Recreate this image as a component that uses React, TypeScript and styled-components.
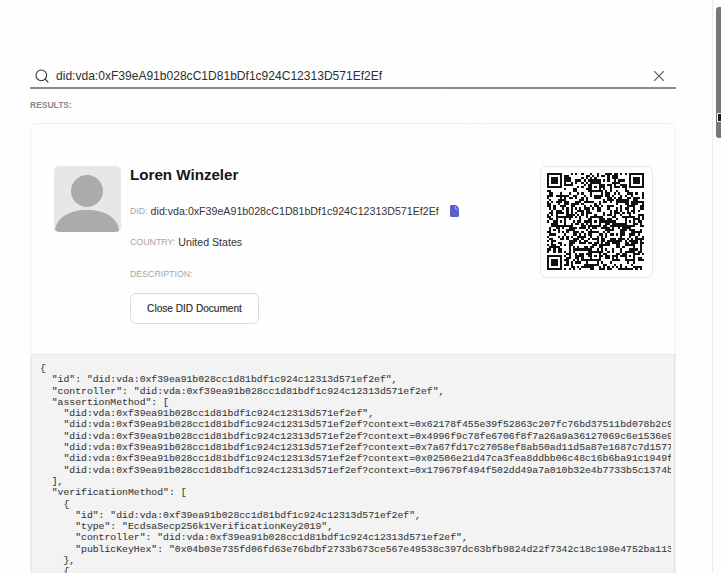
import styled, { createGlobalStyle } from "styled-components";
import { Search, X } from "lucide-react";

const DID_FULL = "did:vda:0xF39eA91b028cC1D81bDf1c924C12313D571Ef2Ef";
const DID = DID_FULL.toLowerCase();

const didDocument = `{
  "id": "${DID}",
  "controller": "${DID}",
  "assertionMethod": [
    "${DID}",
    "${DID}?context=0x62178f455e39f52863c207fc76bd37511bd078b2c9a1",
    "${DID}?context=0x4996f9c78fe6706f8f7a26a9a36127069c6e1536e9a1",
    "${DID}?context=0x7a67fd17c27058ef8ab50ad11d5a87e1687c7d1577a1",
    "${DID}?context=0x02506e21d47ca3fea8ddbb06c48c16b6ba91c1949fa1",
    "${DID}?context=0x179679f494f502dd49a7a010b32e4b7733b5c1374ba1"
  ],
  "verificationMethod": [
    {
      "id": "${DID}",
      "type": "EcdsaSecp256k1VerificationKey2019",
      "controller": "${DID}",
      "publicKeyHex": "0x04b03e735fd06fd63e76bdbf2733b673ce567e49538c397dc63bfb9824d22f7342c18c198e4752ba1139"
    },
    {`;

const GlobalStyle = createGlobalStyle`
  html, body {
    margin: 0;
    padding: 0;
    background: #fefefe;
    overflow: hidden;
  }
  * {
    box-sizing: border-box;
  }
`;

const Page = styled.div`
  position: relative;
  width: 721px;
  height: 573px;
  display: flex;
  overflow: hidden;
  background: #fefefe;
  font-family: "Liberation Sans", Arial, sans-serif;
`;

const Backdrop = styled.svg`
  position: absolute;
  inset: 0;
  width: 721px;
  height: 573px;
`;

const Main = styled.main`
  position: relative;
  flex: 1;
  display: flex;
  flex-direction: column;
  padding: 62px 36px 0 30px;
  min-width: 0;
`;

const SearchBar = styled.div`
  height: 27px;
  flex: none;
  display: flex;
  align-items: center;
  padding: 2px 8px 0 4px;
  border-bottom: 2px solid #8a8a8a;
`;

const SearchText = styled.span`
  flex: 1;
  margin-left: 6px;
  font-size: 12.05px;
  color: #2e2e2e;
`;

const ResultsLabel = styled.div`
  margin-top: 11px;
  font-size: 8.5px;
  line-height: 11px;
  font-weight: 700;
  color: #8b8b8b;
`;

const Card = styled.section`
  margin-top: 12px;
  flex: none;
  border: 1px solid #f1f1f1;
  border-radius: 6px;
`;

const Summary = styled.div`
  height: 230px;
  display: flex;
  padding: 42px 22px 0 23px;
`;

const Avatar = styled.svg`
  flex: none;
  width: 67px;
  height: 66px;
  border-radius: 5px;
  background: #e6e7e8;
`;

const Details = styled.div`
  flex: 1;
  margin-left: 9px;
  min-width: 0;
`;

const Name = styled.h2`
  margin: 0;
  font-size: 15.15px;
  line-height: 18px;
  font-weight: 700;
  color: #16161a;
`;

const Field = styled.div`
  display: flex;
  align-items: center;
  height: 14px;
  margin-top: 17.25px;
  &:first-of-type {
    margin-top: 20px;
  }
`;

const FieldLabel = styled.span`
  font-size: 8.8px;
  color: #a6a6a6;
  margin-right: 3px;
`;

const FieldValue = styled.span`
  font-size: 10.65px;
  color: #333333;
`;

const CopyIcon = styled.svg`
  width: 9px;
  height: 12px;
  margin-left: 11px;
`;

const CloseButton = styled.button`
  display: block;
  width: 129px;
  height: 31px;
  margin-top: 12.5px;
  padding: 0;
  background: #ffffff;
  border: 1px solid #dcdcdc;
  border-radius: 6px;
  font-family: inherit;
  font-size: 10.1px;
  color: #2c2c2c;
  -webkit-text-stroke: 0.15px #2c2c2c;
`;

const QrFrame = styled.div`
  flex: none;
  width: 113px;
  height: 112px;
  padding: 6px 7px 7px 6px;
  background: #ffffff;
  border: 1px solid #e9e9e9;
  border-radius: 6px;
`;

const QrImage = styled.svg`
  display: block;
  width: 97px;
  height: 97px;
  filter: blur(0.4px);
`;

const CodeBlock = styled.div`
  height: 240px;
  padding: 8px 3px 0 8px;
  background: #f3f3f3;
  border-top: 1px solid #e8e8e8;
  border-right: 1px solid #e2e2e2;
  border-left: 1px solid #e8e8e8;
`;

const Code = styled.pre`
  margin: 0;
  overflow: hidden;
  font-family: "Liberation Mono", "Courier New", monospace;
  font-size: 9.77px;
  line-height: 11.3px;
  color: #3a3a3a;
  -webkit-text-stroke: 0.1px #3a3a3a;
`;

const ScrollTrack = styled.div`
  position: relative;
  flex: none;
  width: 9px;
  padding: 7px 0 0 3px;
  background: #fdfdfd;
  border-left: 1px solid #ececec;
`;

const ScrollThumb = styled.div`
  width: 6px;
  height: 131px;
  border-radius: 3px 0 0 3px;
  background: #777777;
`;

const PointerMark = styled.div`
  position: absolute;
  left: 717px;
  top: 113px;
  width: 4px;
  height: 9px;
  background: #1b1b1b;
  border: 1px solid #f2f2f2;
  border-right: none;
`;

const QR_SIZE = 45;
const ALIGN = [6, 22, 38];

const buildQr = () => {
  const grid: boolean[][] = [];
  let seed = 48213;
  const rand = () => {
    seed = (seed * 1664525 + 1013904223) >>> 0;
    return (seed >>> 16) / 65536;
  };
  for (let y = 0; y < QR_SIZE; y++) {
    grid.push([]);
    for (let x = 0; x < QR_SIZE; x++) grid[y].push(rand() > 0.52);
  }
  const stamp = (cx: number, cy: number, half: number, test: (r: number) => boolean) => {
    for (let y = -half; y <= half; y++) {
      for (let x = -half; x <= half; x++) {
        const row = cy + y;
        const col = cx + x;
        if (row < 0 || col < 0 || row >= QR_SIZE || col >= QR_SIZE) continue;
        grid[row][col] = test(Math.max(Math.abs(x), Math.abs(y)));
      }
    }
  };
  ALIGN.forEach((ay) =>
    ALIGN.forEach((ax) => {
      const nearFinder =
        (ax === 6 && ay === 6) || (ax === 38 && ay === 6) || (ax === 6 && ay === 38);
      if (!nearFinder) stamp(ax, ay, 2, (r) => r !== 1);
    })
  );
  const finder = (r: number) => r === 0 || r === 1 || r === 3;
  stamp(3, 3, 4, finder);
  stamp(QR_SIZE - 4, 3, 4, finder);
  stamp(3, QR_SIZE - 4, 4, finder);
  return grid;
};

const QrCode = () => {
  const grid = buildQr();
  return (
    <QrImage viewBox={`0 0 ${QR_SIZE} ${QR_SIZE}`} shapeRendering="crispEdges">
      {grid.map((row, y) =>
        row.map((on, x) =>
          on ? <rect key={`${x}-${y}`} x={x} y={y} width={1} height={1} fill="#111" /> : null
        )
      )}
    </QrImage>
  );
};

export default function App() {
  return (
    <Page>
      <GlobalStyle />
      <Backdrop viewBox="0 0 721 573" fill="none" stroke="#f8f8f8">
        <path d="M380 0 498 62 545 165" />
        <path d="M430 85 540 160M445 100 520 170" />
        <path d="M680 395 712 425M680 430 712 400M680 470 712 505M680 520 712 490M680 560 712 535" />
      </Backdrop>
      <Main>
        <SearchBar>
          <Search size={16} color="#333" strokeWidth={1.6} />
          <SearchText>{DID_FULL}</SearchText>
          <X size={18} color="#666" strokeWidth={1.5} />
        </SearchBar>
        <ResultsLabel>RESULTS:</ResultsLabel>
        <Card>
          <Summary>
            <Avatar viewBox="0 0 67 66">
              <circle cx="33" cy="25" r="16" fill="#a9abad" />
              <path d="M1 66C1 52 15 44 33 44s32 8 32 22z" fill="#a9abad" />
            </Avatar>
            <Details>
              <Name>Loren Winzeler</Name>
              <Field>
                <FieldLabel>DID:</FieldLabel>
                <FieldValue>{DID_FULL}</FieldValue>
                <CopyIcon viewBox="0 0 9 12">
                  <path d="M1.5 0H6l3 3v7.5A1.5 1.5 0 0 1 7.5 12h-6A1.5 1.5 0 0 1 0 10.5v-9A1.5 1.5 0 0 1 1.5 0z" fill="#5a5fcd" />
                  <path d="M5.5 1v3h3" fill="none" stroke="#c5c7ef" strokeWidth="0.7" />
                </CopyIcon>
              </Field>
              <Field>
                <FieldLabel>COUNTRY:</FieldLabel>
                <FieldValue>United States</FieldValue>
              </Field>
              <Field>
                <FieldLabel>DESCRIPTION:</FieldLabel>
              </Field>
              <CloseButton>Close DID Document</CloseButton>
            </Details>
            <QrFrame>
              <QrCode />
            </QrFrame>
          </Summary>
          <CodeBlock>
            <Code>{didDocument}</Code>
          </CodeBlock>
        </Card>
      </Main>
      <ScrollTrack>
        <ScrollThumb />
      </ScrollTrack>
      <PointerMark />
    </Page>
  );
}
